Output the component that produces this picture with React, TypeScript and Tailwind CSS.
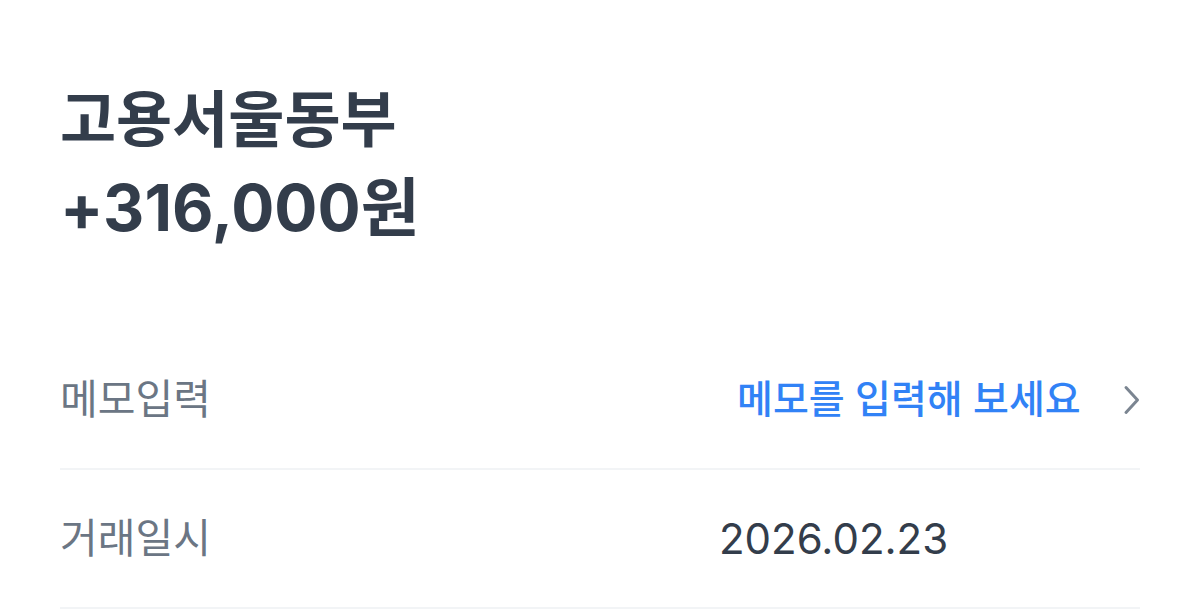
const font = { fontFamily: '"Inter", "Noto Sans CJK KR", sans-serif' };

function Chevron() {
  return (
    <svg width="17" height="30" viewBox="0 0 17 30" fill="none" className="ml-auto">
      <path d="M3 2.5 14.5 15 3 27.5" stroke="#7b8591" strokeWidth="3" strokeLinecap="round" strokeLinejoin="round" />
    </svg>
  );
}

export default function App() {
  return (
    <div className="h-[610px] w-[1200px] overflow-hidden bg-white" style={font}>
      <div className="px-[60px] pt-[77px]">
        <h1 className="font-bold text-[#333d4b]">
          <div className="text-[61px] leading-[87px]">고용서울동부</div>
          <div className="text-[64px] leading-[87px]">+316,000원</div>
        </h1>
      </div>

      <div className="mt-[80px] px-[60px]">
        <div className="flex h-[139px] items-center border-b-2 border-[#f2f4f6]">
          <span className="w-[677px] text-[41px] text-[#6b7684]">메모입력</span>
          <span className="text-[39px] font-medium text-[#3182f6]">메모를 입력해 보세요</span>
          <Chevron />
        </div>
        <div className="flex h-[139px] items-center border-b-2 border-[#f2f4f6]">
          <span className="w-[659px] text-[41px] text-[#6b7684]">거래일시</span>
          <span className="text-[42px] text-[#333d4b]">2026.02.23</span>
        </div>
      </div>
    </div>
  );
}
